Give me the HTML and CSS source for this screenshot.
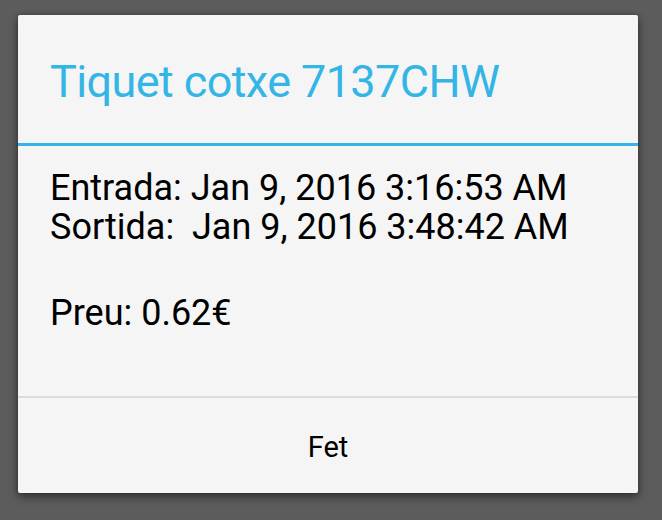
FILE: index.html
```html
<!DOCTYPE html>
<html>
<head>
<meta charset="utf-8">
<link rel="stylesheet" href="styles.css">
</head>
<body>
<div class="dialog">
  <div class="title">Tiquet cotxe 7137CHW</div>
  <div class="title-divider"></div>
  <div class="content">
    <div class="line">Entrada: Jan 9, 2016 3:16:53 AM</div>
    <div class="line">Sortida:&nbsp; Jan 9, 2016 3:48:42 AM</div>
    <div class="line price">Preu: 0.62€</div>
  </div>
  <div class="button-divider"></div>
  <div class="button">Fet</div>
</div>
</body>
</html>
```
FILE: styles.css
```css
html, body {
  margin: 0;
  padding: 0;
}
body {
  background: #5c5c5c;
  width: 662px;
  height: 520px;
  padding: 15px 0 0 18px;
  box-sizing: border-box;
  font-family: Roboto, "Noto Sans", sans-serif;
}
.dialog {
  width: 620px;
  height: 478px;
  background: #f5f5f5;
  border-radius: 2px;
  box-shadow: 0 4px 10px rgba(0,0,0,0.45), 0 0 4px rgba(0,0,0,0.25);
  display: flex;
  flex-direction: column;
}
.title {
  height: 128px;
  box-sizing: border-box;
  padding: 40px 0 0 32px;
  font-size: 45px;
  letter-spacing: -0.6px;
  line-height: normal;
  color: #33b5e5;
}
.title-divider {
  height: 3px;
  background: #33b5e5;
}
.content {
  flex: 1;
  padding: 23px 0 0 32px;
  font-size: 36px;
  line-height: 39px;
  color: #000;
}
.price {
  margin-top: 47px;
}
.button-divider {
  height: 2px;
  background: #dcdcdc;
}
.button {
  height: 95px;
  line-height: 95px;
  padding-top: 2px;
  box-sizing: border-box;
  text-align: center;
  font-size: 29px;
  color: #000;
}
```
